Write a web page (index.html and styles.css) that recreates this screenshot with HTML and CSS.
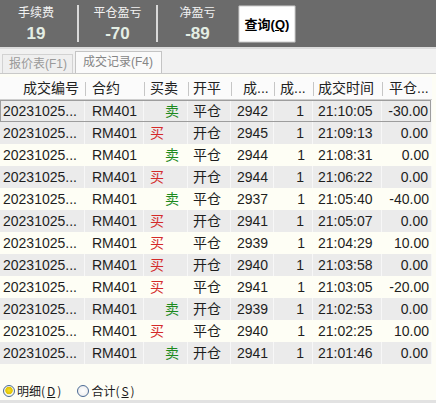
FILE: index.html
```html
<!DOCTYPE html>
<html lang="zh">
<head>
<meta charset="utf-8">
<link rel="stylesheet" href="styles.css">
</head>
<body>
<div class="topbar">
  <div class="stat stat-first"><div class="label">手续费</div><div class="value">19</div></div>
  <div class="divider"></div>
  <div class="stat"><div class="label">平仓盈亏</div><div class="value">-70</div></div>
  <div class="divider"></div>
  <div class="stat stat-third"><div class="label">净盈亏</div><div class="value">-89</div></div>
  <button class="query">查询(<u>Q</u>)</button>
</div>
<div class="tabs">
  <div class="tab">报价表(F1)</div>
  <div class="tab active">成交记录(F4)</div>
</div>
<div class="table">
  <div class="row head">
    <div class="c c1 hr">成交编号</div>
    <div class="c c2">合约</div>
    <div class="c c3">买卖</div>
    <div class="c c4">开平</div>
    <div class="c c5 hc">成...</div>
    <div class="c c6 hc">成...</div>
    <div class="c c7">成交时间</div>
    <div class="c c8 hc">平仓...</div>
  </div>
  <div class="row gray sel"><div class="c c1">20231025...</div><div class="c c2">RM401</div><div class="c c3"><span class="sell">卖</span></div><div class="c c4">平仓</div><div class="c c5">2942</div><div class="c c6">1</div><div class="c c7">21:10:05</div><div class="c c8">-30.00</div></div>
  <div class="row gray"><div class="c c1">20231025...</div><div class="c c2">RM401</div><div class="c c3"><span class="buy">买</span></div><div class="c c4">开仓</div><div class="c c5">2945</div><div class="c c6">1</div><div class="c c7">21:09:13</div><div class="c c8">0.00</div></div>
  <div class="row"><div class="c c1">20231025...</div><div class="c c2">RM401</div><div class="c c3"><span class="sell">卖</span></div><div class="c c4">平仓</div><div class="c c5">2944</div><div class="c c6">1</div><div class="c c7">21:08:31</div><div class="c c8">0.00</div></div>
  <div class="row gray"><div class="c c1">20231025...</div><div class="c c2">RM401</div><div class="c c3"><span class="buy">买</span></div><div class="c c4">开仓</div><div class="c c5">2944</div><div class="c c6">1</div><div class="c c7">21:06:22</div><div class="c c8">0.00</div></div>
  <div class="row"><div class="c c1">20231025...</div><div class="c c2">RM401</div><div class="c c3"><span class="sell">卖</span></div><div class="c c4">平仓</div><div class="c c5">2937</div><div class="c c6">1</div><div class="c c7">21:05:40</div><div class="c c8">-40.00</div></div>
  <div class="row gray"><div class="c c1">20231025...</div><div class="c c2">RM401</div><div class="c c3"><span class="buy">买</span></div><div class="c c4">开仓</div><div class="c c5">2941</div><div class="c c6">1</div><div class="c c7">21:05:07</div><div class="c c8">0.00</div></div>
  <div class="row"><div class="c c1">20231025...</div><div class="c c2">RM401</div><div class="c c3"><span class="buy">买</span></div><div class="c c4">平仓</div><div class="c c5">2939</div><div class="c c6">1</div><div class="c c7">21:04:29</div><div class="c c8">10.00</div></div>
  <div class="row gray"><div class="c c1">20231025...</div><div class="c c2">RM401</div><div class="c c3"><span class="buy">买</span></div><div class="c c4">开仓</div><div class="c c5">2940</div><div class="c c6">1</div><div class="c c7">21:03:58</div><div class="c c8">0.00</div></div>
  <div class="row"><div class="c c1">20231025...</div><div class="c c2">RM401</div><div class="c c3"><span class="buy">买</span></div><div class="c c4">平仓</div><div class="c c5">2941</div><div class="c c6">1</div><div class="c c7">21:03:05</div><div class="c c8">-20.00</div></div>
  <div class="row gray"><div class="c c1">20231025...</div><div class="c c2">RM401</div><div class="c c3"><span class="sell">卖</span></div><div class="c c4">开仓</div><div class="c c5">2939</div><div class="c c6">1</div><div class="c c7">21:02:53</div><div class="c c8">0.00</div></div>
  <div class="row"><div class="c c1">20231025...</div><div class="c c2">RM401</div><div class="c c3"><span class="buy">买</span></div><div class="c c4">平仓</div><div class="c c5">2940</div><div class="c c6">1</div><div class="c c7">21:02:25</div><div class="c c8">10.00</div></div>
  <div class="row gray"><div class="c c1">20231025...</div><div class="c c2">RM401</div><div class="c c3"><span class="sell">卖</span></div><div class="c c4">开仓</div><div class="c c5">2941</div><div class="c c6">1</div><div class="c c7">21:01:46</div><div class="c c8">0.00</div></div>
</div>
<div class="bottom">
  <label class="radio"><span class="dot on"></span>明细(<u>D</u>)</label>
  <label class="radio"><span class="dot"></span>合计(<u>S</u>)</label>
</div>
</body>
</html>
```

FILE: styles.css
```css
* { box-sizing: border-box; }
html, body { margin: 0; padding: 0; }
body {
  width: 436px;
  height: 403px;
  overflow: hidden;
  background: #fdfdf5;
  font-family: "Liberation Sans", "Noto Sans CJK SC", sans-serif;
  font-size: 14px;
  color: #1e1e1e;
}
.topbar {
  height: 47px;
  background: #6b6b6b;
  display: flex;
  align-items: center;
}
.stat {
  width: 77px;
  height: 47px;
  display: flex;
  flex-direction: column;
  align-items: center;
  color: #f2f2f2;
}
.stat-first { width: 77px; padding-right: 5px; }
.stat-third { width: 79px; }
.label {
  font-size: 12px;
  line-height: 14px;
  margin-top: 6px;
}
.value {
  font-size: 17px;
  font-weight: bold;
  line-height: 20px;
  margin-top: 4px;
  color: #e4eee4;
}
.divider {
  width: 2px;
  height: 37px;
  background: #d9d9d9;
}
.query {
  margin-left: 1px;
  width: 58px;
  height: 38px;
  background: #ffffff;
  border: 1px solid #9c9c9c;
  box-shadow: inset 0 0 0 1px #e6e6e6;
  border-radius: 2px;
  font-family: "Liberation Sans", "Noto Sans CJK SC", sans-serif;
  font-size: 13px;
  font-weight: bold;
  color: #000;
  padding: 0;
}
.tabs {
  height: 27px;
  background: #f1f1f1;
  border-top: 2px solid #dcdcdc;
  border-bottom: 1px solid #c9c9c9;
  display: flex;
  align-items: flex-end;
  padding-left: 2px;
  gap: 2px;
}
.tab {
  height: 19px;
  padding: 0 5px 0 6px;
  font-size: 12px;
  line-height: 18px;
  color: #9a9a9a;
  border: 1px solid #d2d2d2;
  border-bottom: none;
  background: #efefef;
}
.tab.active {
  height: 22px;
  line-height: 21px;
  color: #858585;
  background: #fafafa;
  border-color: #c4c4c4;
  padding: 0 8px 0 7px;
}
.table {
  margin-top: 3px;
  width: 432px;
}
.row {
  display: grid;
  grid-template-columns: 85px 59px 44px 43px 43px 39px 69px 50px;
  height: 22px;
  line-height: 22px;
  background: #fefef5;
}
.row .c {
  white-space: nowrap;
  overflow: hidden;
}
.row.gray .c {
  background: #ebebeb;
  border-right: 1px solid #f7f7f7;
}
.row.sel {
  outline: 1px solid #9d9d9d;
  outline-offset: -1px;
  width: 431px;
}
.row.head {
  height: 23px;
  background: #fbfbfb;
  border-bottom: 1px solid #cfcfcf;
  line-height: 22px;
  color: #222;
}
.row.head .c { position: relative; }
.row.head .c + .c::before {
  content: "";
  position: absolute;
  left: 0;
  top: 5px;
  width: 1px;
  height: 14px;
  background: #c6c6c6;
}
.c1 { padding-left: 3px; }
.c2 { padding-left: 7px; }
.c3 { padding-left: 6px; }
.c4 { padding-left: 5px; }
.c5 { padding-left: 6px; }
.c6 { text-align: right; padding-right: 8px; }
.c7 { padding-left: 5px; }
.c8 { text-align: right; padding-right: 3px; }
.row.head .hr { text-align: right; padding-right: 6px; }
.row.head .c5.hc { padding-left: 12px; }
.row.head .c6.hc { text-align: left; padding-left: 6px; }
.row.head .c8.hc { text-align: left; padding-left: 7px; }
.sell { color: #1d8a1d; padding-left: 15px; }
.buy { color: #d42a2a; }
.bottom {
  height: 39px;
  display: flex;
  align-items: flex-end;
  padding: 0 0 2px 3px;
  gap: 16px;
  font-size: 12px;
  font-family: "Noto Sans CJK SC", "Liberation Sans", sans-serif;
  color: #1a1a1a;
  border-bottom: 3px solid #e2e2e2;
}
.radio {
  display: flex;
  align-items: center;
  gap: 2px;
  line-height: 14px;
}
.dot {
  width: 12px;
  height: 12px;
  border-radius: 50%;
  border: 1px solid #4a6a95;
  background: radial-gradient(circle at 50% 50%, #ffffff 0, #e8e8e8 100%);
}
.dot.on {
  background: radial-gradient(circle at 50% 45%, #f5df2a 0, #e3c300 45%, #f4f4e4 55%, #ffffff 100%);
}
```
